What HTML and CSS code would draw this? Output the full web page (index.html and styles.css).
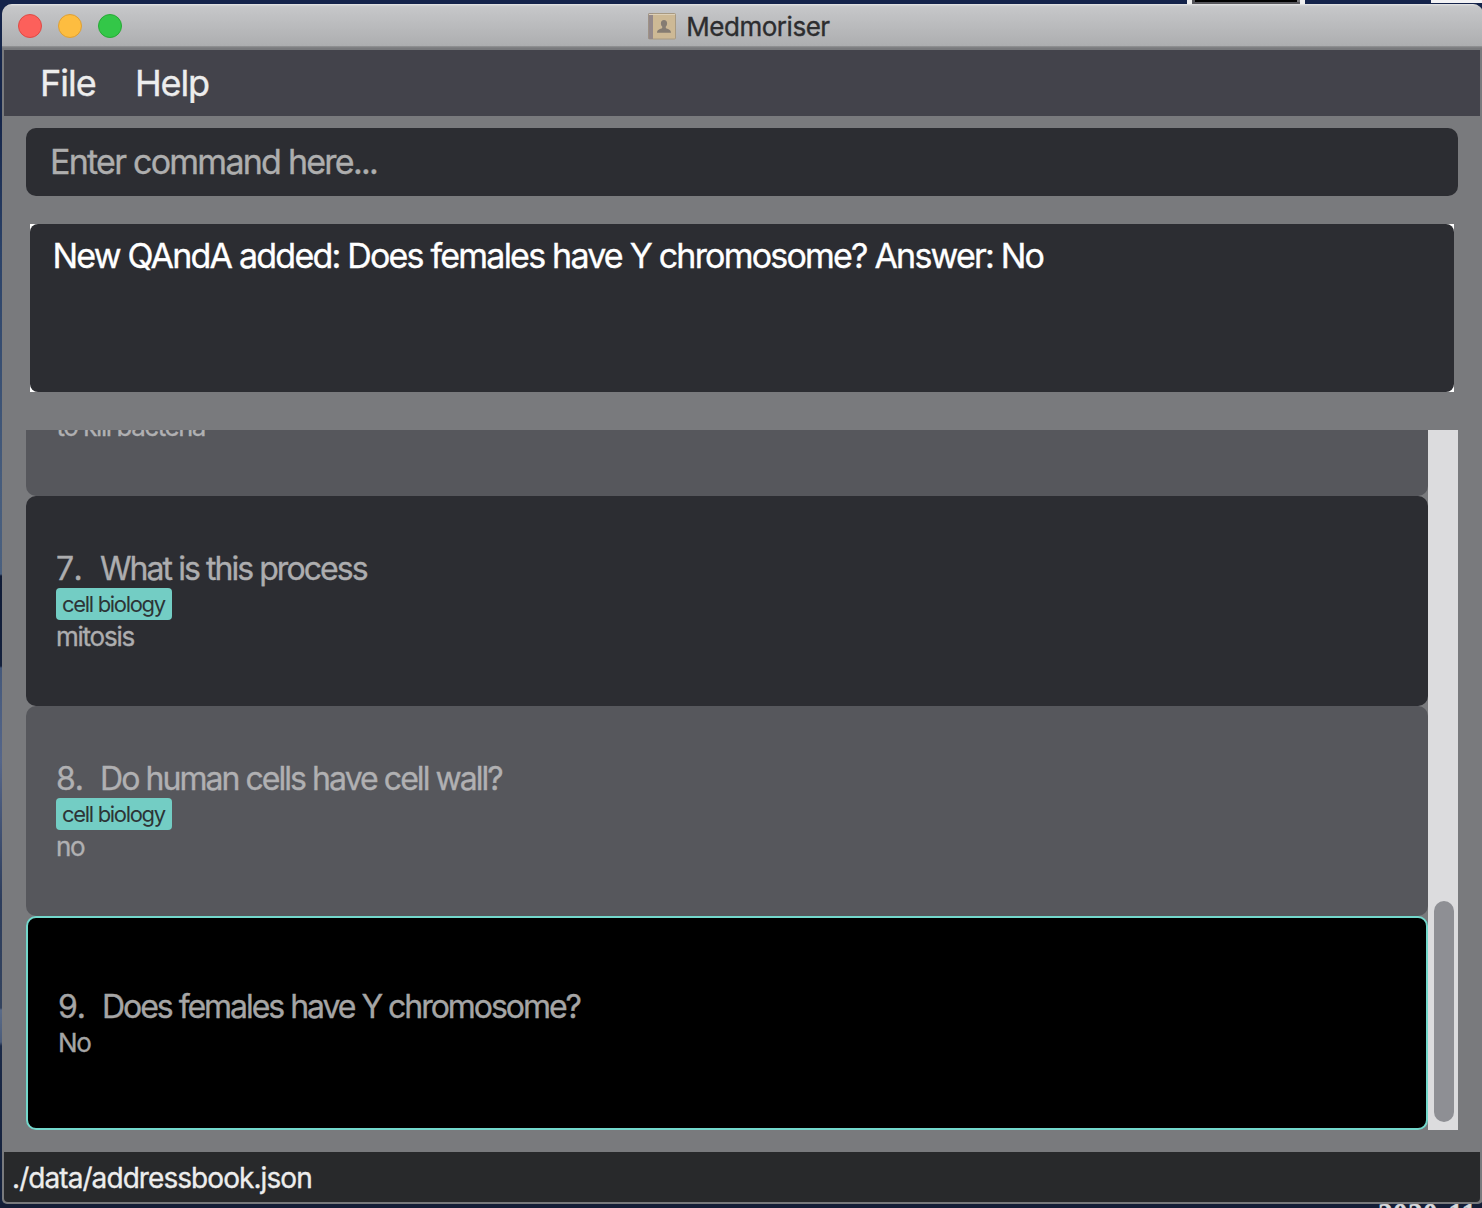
FILE: index.html
```
<!DOCTYPE html>
<html lang="en">
<head>
<meta charset="utf-8">
<title>Medmoriser</title>
<link rel="stylesheet" href="styles.css">
</head>
<body>
<div class="desktop">
  <div class="behind-thumb"></div>
  <div class="behind-panel"></div>
  <div class="behind-date">2020-11</div>
  <main class="window">
    <header class="titlebar">
      <div class="lights">
        <span class="light close"></span>
        <span class="light minimise"></span>
        <span class="light maximise"></span>
      </div>
      <svg class="book" width="28" height="27" viewBox="0 0 28 27">
        <rect x="0.5" y="0.5" width="27" height="25.5" rx="1" fill="#cdb995" stroke="#a89a82"/>
        <rect x="0.5" y="0.5" width="4.5" height="25.5" fill="#94898a"/>
        <path d="M1 1.5H27" stroke="#ddd0b8"/>
        <path d="M16 7c-2 0-3.2 1.4-3.1 3.4.1 1.600.6 2.400 1.300 3.100v1.600c-1.600 1.200-5 1.200-5.200 4.600h14c-.2-3.400-3.600-3.400-5.200-4.600v-1.600c.7-.7 1.200-1.500 1.300-3.100C19.200 8.400 18 7 16 7z" fill="#857c72"/>
      </svg>
      <h1 class="title">Medmoriser</h1>
    </header>
    <nav class="menu">
      <span class="menu-item">File</span>
      <span class="menu-item help">Help</span>
    </nav>
    <section class="content">
      <div class="command">Enter command here...</div>
      <div class="result-frame">
        <div class="result">New QAndA added: Does females have Y chromosome? Answer: No</div>
      </div>
      <div class="list">
        <div class="cards">
          <article class="card light-card clipped">
            <p class="answer bacteria">to kill bacteria</p>
          </article>
          <article class="card">
            <h2 class="question"><span class="number seven">7.</span>What is this process</h2>
            <span class="tag">cell biology</span>
            <p class="answer">mitosis</p>
          </article>
          <article class="card light-card">
            <h2 class="question"><span class="number">8.</span>Do human cells have cell wall?</h2>
            <span class="tag">cell biology</span>
            <p class="answer">no</p>
          </article>
          <article class="card selected">
            <h2 class="question long"><span class="number">9.</span>Does females have Y chromosome?</h2>
            <p class="answer">No</p>
          </article>
        </div>
        <div class="scrollbar"><div class="thumb"></div></div>
      </div>
    </section>
    <footer class="status">./data/addressbook.json</footer>
  </main>
</div>
</body>
</html>
```
FILE: styles.css
```
* { box-sizing: border-box; }
body { margin: 0; font-family: Inter, "Liberation Sans", sans-serif; -webkit-text-stroke: 0.35px; }
h1, h2, p { margin: 0; font-weight: 400; }

.desktop {
  position: relative;
  width: 1482px;
  height: 1208px;
  padding: 4px 0 4px 2px;
  overflow: hidden;
  background: linear-gradient(#16264a 0, #16264a 120px, #2b4268 250px, #465c7c 480px, #4a607f 574px, #0f1b36 576px, #14213d 666px, #44587a 668px, #55668a 760px, #2d3d5c 900px, #34445f 1008px, #5a6b88 1010px, #4b5c7a 1042px, #1b2a48 1046px, #14203a 1208px);
}
.desktop::before {
  content: "";
  position: absolute;
  inset: 0 0 auto 0;
  height: 30px;
  background: #14234a;
}
.desktop::after {
  content: "";
  position: absolute;
  inset: auto 0 0 0;
  height: 4px;
  background: #141d36;
}
.behind-thumb {
  position: absolute;
  left: 1187px;
  top: 0;
  width: 118px;
  height: 4px;
  background: #000;
  border: solid #eee;
  border-width: 0 5px;
  box-shadow: inset 3px -2px #55555a, inset -3px 0 #77777a;
}
.behind-panel {
  position: absolute;
  left: 1431px;
  top: 0;
  width: 51px;
  height: 3px;
  background: #f2f2f4;
}
.behind-date {
  position: absolute;
  z-index: 1;
  left: 1378px;
  top: 1197px;
  font: bold 29px/33px "Liberation Serif", serif;
  letter-spacing: 0.5px;
  color: #d9d9dc;
  clip-path: inset(7px 0 0 0);
}

.window {
  position: relative;
  display: flex;
  flex-direction: column;
  width: 1481px;
  height: 1200px;
  border-radius: 10px 10px 5px 5px;
  overflow: hidden;
  background: #797a7d;
}
.titlebar {
  position: relative;
  display: flex;
  justify-content: center;
  height: 46px;
  padding-right: 7px;
  background: linear-gradient(#e6e6e7 0, #c9cacb 2px, #c5c6c8 4px, #adaeb0 42px, #949597 42px, #797a7d 44px);
}
.lights {
  position: absolute;
  left: 16px;
  top: 10px;
  display: flex;
  gap: 16px;
}
.light { width: 24px; height: 24px; border-radius: 50%; border: 1px solid; }
.close { background: #fc605b; border-color: #de4a45; }
.minimise { background: #fdbd40; border-color: #dd9f35; }
.maximise { background: #33c748; border-color: #27a935; }
.book { margin: 9px 10px 0 0; }
.title { font-size: 26px; line-height: 45px; letter-spacing: -0.48px; color: #2d2d2f; }

.menu {
  display: flex;
  margin: 0 3px 0 2px;
  height: 66px;
  padding-left: 36px;
  background: #43434b;
  color: #ededed;
  font-size: 36px;
  line-height: 66px;
  letter-spacing: -1px;
}
.menu-item { width: 95px; }
.help { letter-spacing: -1.15px; }

.content { height: 1036px; padding: 12px 23px 0 24px; }
.command {
  width: 1432px;
  height: 68px;
  padding-left: 24px;
  border-radius: 10px;
  background: #2c2d32;
  color: #aeaeae;
  font-size: 34px;
  line-height: 68px;
  letter-spacing: -1.75px;
}
.result-frame { width: 1424px; margin: 28px 4px 38px; background: #fff; }
.result {
  height: 168px;
  padding: 12px 22.5px;
  border-radius: 8px;
  background: #2c2d32;
  color: #fff;
  font-size: 34px;
  line-height: 40px;
  letter-spacing: -1.79px;
  white-space: nowrap;
}
.list { display: flex; width: 1432px; height: 700px; }
.cards { width: 1402px; }
.card {
  height: 210px;
  padding: 52px 30px 0;
  border-radius: 10px;
  background: #2c2d32;
  color: #adadaf;
}
.light-card { background: #56575c; color: #b0b0b2; }
.clipped { height: 66px; padding-top: 0; border-radius: 0 0 10px 10px; overflow: hidden; }
.clipped .answer { margin-top: -20px; }
.selected {
  height: 214px;
  padding-top: 68px;
  border: 2px solid #73d8cc;
  background: #000;
  color: #a5a5a5;
}
.question {
  display: flex;
  height: 40px;
  font-size: 32px;
  line-height: 42px;
  letter-spacing: -1.95px;
  white-space: nowrap;
}
.long { letter-spacing: -2.04px; }
.number { width: 44px; letter-spacing: -0.3px; }
.seven { letter-spacing: 3.4px; }
.tag {
  display: block;
  width: 116px;
  height: 32px;
  padding-left: 6px;
  border-radius: 4px;
  background: #73cdc4;
  color: #2d3436;
  font-size: 22px;
  line-height: 33px;
  letter-spacing: -1.32px;
  white-space: nowrap;
  -webkit-text-stroke: 0;
}
.answer { font-size: 26px; line-height: 34px; letter-spacing: -1.24px; }
.bacteria { padding-left: 0.5px; letter-spacing: -1.46px; }
.scrollbar { width: 30px; padding: 471px 4px 0 6px; background: #dcdcde; }
.thumb { height: 221px; border-radius: 10px; background: #8e8f94; }

.status {
  height: 50px;
  margin: 0 3px 0 2px;
  padding-left: 8px;
  border-radius: 0 0 4px 4px;
  background: #28292b;
  color: #ededed;
  font-size: 28px;
  line-height: 52px;
  letter-spacing: -0.93px;
}
```
